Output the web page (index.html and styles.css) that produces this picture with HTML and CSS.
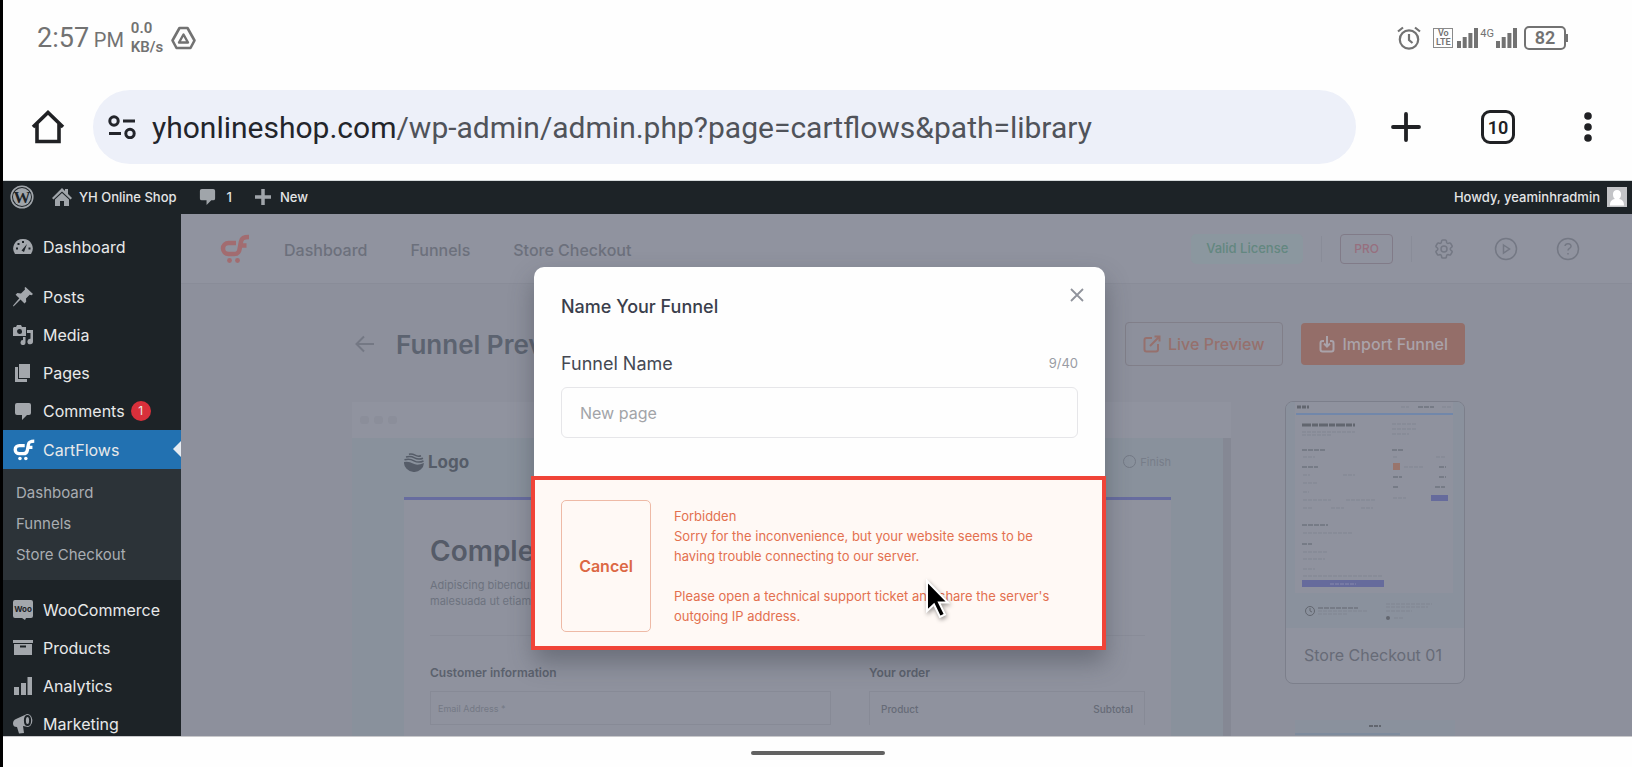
FILE: index.html
```html
<!DOCTYPE html>
<html lang="en">
<head>
    <meta charset="UTF-8">
    <meta name="viewport" content="width=device-width, initial-scale=1.0">
    <title>CartFlows - YH Online Shop</title>
    <link rel="stylesheet" href="styles.css">
</head>
<body>
    <svg class="defs" aria-hidden="true">
        <symbol id="cf-logo" viewBox="0 0 30 30">
            <path d="M16 9H8.500a5.500 5.500 0 0 0 0 11H14c3.500 0 5-1.500 5.500-4.500L21 7.500C21.700 4 23.500 3 29 3M20 11.500h6.500" fill="none" stroke="currentColor" stroke-width="4.500"/>
            <circle cx="9.500" cy="26.500" r="2.400" fill="currentColor"/>
            <circle cx="17.500" cy="26.500" r="2.400" fill="currentColor"/>
        </symbol>
        <symbol id="comment" viewBox="0 0 20 20">
            <path d="M4 2h12q2 0 2 2v8q0 2-2 2h-2l-5 5v-5H4q-2 0-2-2V4q0-2 2-2z" fill="currentColor"/>
        </symbol>
        <symbol id="signal" viewBox="0 0 21 20">
            <path d="M0 13h4v7H0zM5.700 9h4v11h-4zM11.400 5h4v15h-4zM17 0h4v20h-4z" fill="currentColor"/>
        </symbol>
    </svg>

    <div class="phone">
        <div class="status-bar">
            <span class="time">2:57 <small>PM</small></span>
            <span class="speed">0.0<br>KB/s</span>
            <svg class="drive" viewBox="0 0 25 24" width="25" height="24" fill="none" stroke="currentColor" stroke-linejoin="round">
                <path d="M8.500 2h8l7 12.500-4 7.500h-14l-4-7.500z" stroke-width="2.600"/>
                <path d="M12.500 8.500l4.500 8H8z" stroke-width="2.400"/>
            </svg>
            <div class="status-right">
                <svg class="alarm" viewBox="0 0 24 24" width="24" height="24" fill="none" stroke="currentColor" stroke-width="2.200">
                    <circle cx="12" cy="13.500" r="9.200"/><path d="M12 8v6l3.500 3M1 5.500l5-4M23 5.500l-5-4"/>
                </svg>
                <span class="volte">Vo<br>LTE</span>
                <svg width="21" height="20"><use href="#signal"/></svg>
                <span class="net">4G</span>
                <svg width="21" height="20"><use href="#signal"/></svg>
                <span class="battery">82</span>
            </div>
        </div>

        <div class="browser-bar">
            <button class="icon-btn" aria-label="Home">
                <svg viewBox="0 0 34 34" width="34" height="34" fill="none" stroke="currentColor" stroke-width="3.600"><path d="M2 17L17 2.500 32 17M6 14v17.500h22V14"/></svg>
            </button>
            <div class="omnibox">
                <svg viewBox="0 0 28 24" width="28" height="24" fill="none" stroke="currentColor" stroke-width="3"><circle cx="6" cy="6" r="4.200"/><path d="M15 6h12M1 18.500h12"/><circle cx="22" cy="18.500" r="4.200"/></svg>
                <span class="url">yhonlineshop.com<span>/wp-admin/admin.php?page=cartflows&amp;path=library</span></span>
            </div>
            <div class="browser-actions">
                <button class="icon-btn" aria-label="New tab">
                    <svg viewBox="0 0 30 30" width="30" height="30" fill="none" stroke="currentColor" stroke-width="3.800" stroke-linecap="round"><path d="M15 2v26M2 15h26"/></svg>
                </button>
                <button class="tabs">10</button>
                <button class="icon-btn menu" aria-label="Menu">
                    <svg viewBox="0 0 8 32" width="8" height="32" fill="currentColor"><circle cx="4" cy="5" r="3.800"/><circle cx="4" cy="16" r="3.800"/><circle cx="4" cy="27" r="3.800"/></svg>
                </button>
            </div>
        </div>

        <div class="admin-bar">
            <svg class="wp" viewBox="0 0 24 24" width="24" height="24"><circle cx="12" cy="12" r="10.800" fill="none" stroke="currentColor" stroke-width="1.600"/><circle cx="12" cy="12" r="9" fill="currentColor"/><text x="12" y="18" text-anchor="middle">W</text></svg>
            <a href="#" class="site"><svg viewBox="0 0 20 20" width="20" height="20" fill="currentColor"><path d="M10 1l3 3V2h3v5l4 4-1.500 1.500L10 4.500l-8.500 8L0 11z"/><path d="M10 6l7 6.500V19h-5v-5H8v5H3v-6.500z"/></svg>YH Online Shop</a>
            <a href="#" class="count"><svg width="19" height="19"><use href="#comment"/></svg>1</a>
            <a href="#" class="new"><svg viewBox="0 0 16 16" width="16" height="16" fill="none" stroke="currentColor" stroke-width="3.500"><path d="M8 0v16M0 8h16"/></svg>New</a>
            <a href="#" class="howdy">Howdy, yeaminhradmin
                <svg viewBox="0 0 20 20" width="20" height="20"><path fill="#c3c4c7" d="M0 0h20v20H0z"/><path fill="#fff" d="M10 3a4 4 0 0 1 4 4.500c0 2-.8 3.500-2 4.500 4 .8 5 3 5 6.500H3c0-3.500 1-5.700 5-6.500-1.200-1-2-2.500-2-4.500A4 4 0 0 1 10 3z"/></svg>
            </a>
        </div>

        <div class="wrap">
            <nav class="sidebar">
                <a href="#" class="first"><svg viewBox="0 0 20 20"><path d="M10 2a9.500 9.500 0 0 1 8 15H2a9.500 9.500 0 0 1 8-15z"/><path class="cut" d="M11 15l3-8-5.500 6.500zM9 4h2v2H9zM4.500 6h2v2h-2zM3 10.500h2v2H3zM15.500 10.500h2v2h-2z"/></svg>Dashboard</a>
                <a href="#"><svg viewBox="0 0 20 20"><path d="M12.500 0L20 7l-1.500 1.200-1.800-.4-3.700 3.700.2 3.300-1.700 1.700-4-4L1 19l-1 .5.300-1.200 6-7-3.700-3.500L4.300 6l3.700.4 4-3.900-.4-1.700z"/></svg>Posts</a>
                <a href="#"><svg viewBox="0 0 20 20"><path fill-rule="evenodd" d="M1 2h2l1-2h4l1 2h4v9H0V3zM6.500 4a2.500 2.500 0 1 0 .1 5A2.500 2.500 0 0 0 6.500 4z"/><path d="M14 5h6v11.500a2.800 2.800 0 1 1-2.500-2.800V8H14zM10 12h2.500v5.500a2.500 2.500 0 1 1-2.500-2.400z"/></svg>Media</a>
                <a href="#"><svg viewBox="0 0 20 20"><path d="M6 1h11v14H6z"/><path d="M2 4h3v12h9v3H2z"/></svg>Pages</a>
                <a href="#"><svg><use href="#comment"/></svg>Comments <span class="badge">1</span></a>
                <a href="#" class="current"><svg><use href="#cf-logo"/></svg>CartFlows</a>
                <div class="submenu">
                    <a href="#">Dashboard</a>
                    <a href="#">Funnels</a>
                    <a href="#">Store Checkout</a>
                </div>
                <a href="#"><svg viewBox="0 0 20 20"><path d="M2 0h16q2 0 2 2v14q0 2-2 2h-5l-1 2-3-2H2q-2 0-2-2V2q0-2 2-2z"/><text class="cut" x="10" y="12" text-anchor="middle">Woo</text></svg>WooCommerce</a>
                <a href="#"><svg viewBox="0 0 20 20"><path d="M0 2h20v3H0z"/><path fill-rule="evenodd" d="M1 6h18v11H1zM7 7.500v2h6v-2z"/></svg>Products</a>
                <a href="#"><svg viewBox="0 0 20 20"><path d="M1 11h5v8H1zM8 7h5v12H8zM14.500 1h4.500v18h-4.500z"/></svg>Analytics</a>
                <a href="#"><svg viewBox="0 0 20 20"><path d="M14 0q3 0 4.500 3t.5 6-4 4l-5-1 1 7-5 .5-2-6.500Q0 13 0 9.500T3 5z"/><ellipse class="ring" cx="14.500" cy="6.500" rx="2.600" ry="4.500"/></svg>Marketing</a>
            </nav>

            <main class="content">
                <header class="cf-header">
                    <svg class="cf-logo" width="30" height="30"><use href="#cf-logo"/></svg>
                    <nav class="cf-nav">
                        <a href="#">Dashboard</a>
                        <a href="#">Funnels</a>
                        <a href="#">Store Checkout</a>
                    </nav>
                    <div class="cf-status">
                        <span class="license">Valid License</span>
                        <i></i>
                        <span class="pro">PRO</span>
                        <i></i>
                    </div>
                    <div class="cf-icons">
                        <svg viewBox="0 0 24 24"><path d="M9.600 3.900c.1-.5.500-.9 1.100-.9h2.600c.6 0 1 .4 1.100.9l.2 1.300c.1.400.3.700.6.900l.7.300 1.400-.4c.5-.2 1.100 0 1.400.5l1.300 2.200c.3.500.2 1.100-.3 1.500l-1 .8c-.3.300-.5.600-.4 1 0 .4.100.7.400 1l1 .8c.5.400.6 1 .3 1.500l-1.300 2.200c-.3.500-.9.700-1.400.5l-1.300-.5-.9.300c-.2.200-.4.500-.5.900l-.2 1.300c-.1.500-.5.900-1.100.9h-2.600c-.6 0-1-.4-1.100-.9l-.2-1.300-.5-.9-.8-.3-1.300.5c-.5.200-1.100 0-1.400-.5l-1.300-2.200c-.3-.5-.2-1.100.3-1.500l1-.8c.5-.6.500-1.400 0-2l-1-.8c-.5-.4-.6-1-.3-1.500l1.300-2.200c.3-.5.900-.7 1.400-.5l1.300.4.800-.3.500-.9z"/><circle cx="12" cy="12" r="3"/></svg>
                        <svg viewBox="0 0 24 24"><circle cx="12" cy="12" r="10.500"/><path d="M9.500 8l6 4-6 4z"/></svg>
                        <svg viewBox="0 0 24 24"><circle cx="12" cy="12" r="10.500"/><path d="M9 9c.5-3.500 6.500-2.800 6 .5-.3 2-3 1.800-3 4M12 16v1.500"/></svg>
                    </div>
                </header>

                <div class="page">
                    <div class="page-head">
                        <svg viewBox="0 0 20 18" width="20" height="18" fill="none" stroke="currentColor" stroke-width="2"><path d="M19 9H2M9 1.500L1.500 9 9 16.500"/></svg>
                        <h1>Funnel Preview</h1>
                        <button class="btn btn-outline"><svg viewBox="0 0 18 18"><path d="M9 3H3.500Q1.500 3 1.500 5v9.500q0 2 2 2H13q2 0 2-2V9M7 11l9-9M11.500 1.500H16.500V6.500"/></svg>Live Preview</button>
                        <button class="btn btn-primary"><svg viewBox="0 0 18 18"><path d="M6 6H4.500q-2 0-2 2v6.500q0 2 2 2h9q2 0 2-2V8q0-2-2-2H12M9 1v10M6 8.500L9 11.500l3-3"/></svg>Import Funnel</button>
                    </div>

                    <div class="columns">
                        <section class="preview">
                            <div class="dots"><i></i><i></i><i></i></div>
                            <div class="site-preview">
                                <div class="site-head">
                                    <svg viewBox="0 0 20 20" width="20" height="20"><path d="M0 10q5-1 9 1.500t11-.5a10 9.500 0 0 1-20-1z" fill="currentColor"/><path d="M.5 7.800q5-1.500 9.500 1t9.500.2M2 5q4.500-1.500 8.500.8t8.500.4M5 2.200q3-.7 6 1t6 .5" fill="none" stroke="currentColor" stroke-width="1.500"/></svg>
                                    <b>Logo</b>
                                    <span class="finish"><i></i>Finish</span>
                                </div>
                                <div class="site-body">
                                    <h2>Complete your order</h2>
                                    <p>Adipiscing bibendum est ultricies integer<br>malesuada ut etiam pellentesque ornare</p>
                                    <div class="checkout">
                                        <div>
                                            <h3><label for="email">Customer information</label></h3>
                                            <input type="email" id="email" placeholder="Email Address *">
                                        </div>
                                        <div>
                                            <h3>Your order</h3>
                                            <table>
                                                <tr><th>Product</th><th>Subtotal</th></tr>
                                            </table>
                                        </div>
                                    </div>
                                </div>
                            </div>
                        </section>

                        <aside>
                            <a href="#" class="card">
                                <svg viewBox="0 0 178 226">
                                    <path fill="#8a919d" d="M0 0h178v226H0z"/>
                                    <path fill="#8f929e" d="M9 0h158v191H9z"/>
                                    <path stroke="#7187aa" stroke-width="2" d="M10 12h157"/>
                                    <g fill="none" stroke="#62666f" stroke-width="3">
                                        <path d="M11 5h12" stroke-dasharray="4 1"/><path d="M16 23h53" stroke-dasharray="9 1 6 1"/>
                                    </g>
                                    <g fill="none" stroke="#767b86" stroke-width="2">
                                        <path d="M16 48h24M16 65h16M16 123h26M16 142h10M106 48h12M107 75h9M107 85h6M149 85h10M153 65h7M153 75h7M132 5h16M32 206h40" stroke-dasharray="5 1"/>
                                    </g>
                                    <g fill="none" stroke="#808591" stroke-width="1">
                                        <path d="M16 30h53M16 33h29M17 55h12M17 73h7M57 73h12M17 81h14M17 90h6M17 98h28M60 98h30M17 106h9M45 106h13M75 106h12M17 131h50M17 150h25M17 157h22M17 167h12M17 174h80M106 22h24M106 27h24M106 32h17M107 55h5M150 55h10M118 65h20M107 96h13M115 5h8M156 5h10M32 209h49M32 212h30M100 202h46M100 205h42M100 209h26M108 216h10" stroke-dasharray="4 1"/>
                                    </g>
                                    <path fill="#99756c" d="M107 61h7v7h-7z"/>
                                    <path fill="#666b9c" d="M145 93h17v6h-17zM16 178h82v7H16z"/>
                                    <path stroke="#878aad" stroke-width="1" stroke-dasharray="4 1" d="M44 182h26"/>
                                    <circle cx="24" cy="209" r="4.500" fill="none" stroke="#62666f"/><path d="M24 206v3l2 1" fill="none" stroke="#62666f"/>
                                    <circle cx="102" cy="216" r="2" fill="#62666f"/>
                                </svg>
                                <span>Store Checkout 01</span>
                            </a>
                            <div class="next-card">
                                <svg viewBox="0 0 160 60"><path fill="#8a919d" d="M0 0h160v60H0z"/><path stroke="#62666f" stroke-width="2" stroke-dasharray="4 1" d="M74 6h12"/><path stroke="#73859c" d="M0 14h105"/></svg>
                            </div>
                        </aside>
                    </div>
                </div>
            </main>

            <div class="overlay">
                <div class="modal" role="dialog" aria-labelledby="modal-title">
                    <div class="modal-body">
                        <button class="close" aria-label="Close"><svg viewBox="0 0 14 14" width="14" height="14" fill="none" stroke="currentColor" stroke-width="1.800"><path d="M1 1l12 12M13 1L1 13"/></svg></button>
                        <h2 id="modal-title">Name Your Funnel</h2>
                        <div class="field-head">
                            <label for="funnel-name">Funnel Name</label>
                            <span>9/40</span>
                        </div>
                        <input type="text" id="funnel-name" placeholder="New page">
                    </div>
                    <div class="modal-footer">
                        <button class="cancel">Cancel</button>
                        <p>Forbidden<br>Sorry for the inconvenience, but your website seems to be having trouble connecting to our server.<br><br>Please open a technical support ticket and share the server's outgoing IP address.</p>
                        <svg class="cursor" viewBox="0 0 30 42" width="30" height="42"><path d="M4 3v30l7-6.500L17 39l5-2.500-6-12h9z" fill="#000" stroke="#fff" stroke-width="2"/></svg>
                    </div>
                </div>
            </div>
        </div>

        <div class="gesture-bar"><span></span></div>
    </div>
</body>
</html>
```
FILE: styles.css
```css
* {
    box-sizing: border-box;
}
body {
    margin: 0;
    font-family: Inter, "Liberation Sans", sans-serif;
    background: #fefefe;
}
a {
    color: inherit;
    text-decoration: none;
}
button {
    font-family: inherit;
    padding: 0;
    border: none;
    background: none;
    cursor: pointer;
}
h1, h2, h3, p {
    margin: 0;
}
svg {
    flex: none;
}
.defs {
    position: absolute;
    width: 0;
    height: 0;
}
.phone {
    height: 100vh;
    display: flex;
    flex-direction: column;
    border-left: 3px solid #000;
    overflow: hidden;
}

/* Status bar */
.status-bar {
    display: flex;
    align-items: center;
    height: 76px;
    padding: 0 66px 0 34px;
    font-family: Roboto, sans-serif;
    color: #727272;
}
.time {
    font-size: 27px;
}
.time small {
    font-size: 20px;
    margin-left: -2px;
}
.speed {
    margin-left: 7px;
    font-size: 15px;
    font-weight: 600;
    line-height: 19px;
}
.drive {
    margin-left: 8px;
}
.status-right {
    margin-left: auto;
    display: flex;
    align-items: center;
    gap: 2px;
}
.alarm {
    margin-right: 10px;
}
.volte {
    width: 20px;
    height: 20px;
    margin-right: 2px;
    border: 1px solid #8a8a8a;
    font-size: 9px;
    font-weight: 600;
    line-height: 9px;
    text-align: center;
}
.net {
    height: 20px;
    font-size: 11px;
    line-height: 11px;
}
.battery {
    position: relative;
    width: 42px;
    height: 24px;
    margin-left: 5px;
    border: 2px solid #727272;
    border-radius: 5px;
    font-size: 18px;
    font-weight: 600;
    line-height: 20px;
    text-align: center;
}
.battery::after {
    content: "";
    position: absolute;
    right: -4px;
    top: 6px;
    width: 2px;
    height: 8px;
    background: #727272;
}

/* Browser bar */
.browser-bar {
    display: flex;
    align-items: center;
    height: 105px;
    padding: 0 40px 2px 28px;
    border-bottom: 1px solid #d5dadb;
    color: #202124;
}
.icon-btn {
    color: inherit;
    display: flex;
}
.omnibox {
    flex: 1;
    display: flex;
    align-items: center;
    gap: 16px;
    height: 74px;
    margin: 0 35px 0 28px;
    padding-left: 15px;
    border-radius: 37px;
    background: #edf0f9;
    color: #23252b;
}
.url {
    font-family: Roboto, sans-serif;
    font-size: 30px;
    white-space: nowrap;
}
.url span {
    color: #50535a;
}
.browser-actions {
    display: flex;
    align-items: center;
    gap: 60px;
}
.menu {
    padding: 0 0 0 9px;
}
.tabs {
    width: 34px;
    height: 34px;
    border: 3px solid #202124;
    border-radius: 9px;
    font-family: Roboto, sans-serif;
    font-size: 18px;
    font-weight: 600;
    color: #202124;
}

/* WordPress admin bar */
.admin-bar {
    display: flex;
    align-items: center;
    height: 33px;
    padding: 0 5px 2px 7px;
    background: #1d2327;
    color: #e4e5e6;
    font-size: 13px;
    font-weight: 500;
}
.admin-bar a {
    display: flex;
    align-items: center;
}
.admin-bar svg {
    color: #a0a5aa;
}
.wp text {
    font: bold 17px "Liberation Serif", serif;
    fill: #1d2327;
}
.site {
    margin-left: 18px;
    gap: 7px;
}
.count {
    margin-left: 21px;
    gap: 10px;
}
.new {
    margin-left: 23px;
    gap: 9px;
}
.admin-bar .howdy {
    margin-left: auto;
    gap: 7px;
}

/* Sidebar */
.wrap {
    position: relative;
    flex: 1;
    min-height: 0;
    display: flex;
    overflow: hidden;
}
.sidebar {
    width: 178px;
    flex: none;
    padding-top: 14px;
    background: #1d2327;
    color: #e8e9ea;
    font-size: 16px;
}
.sidebar > a {
    position: relative;
    display: flex;
    align-items: center;
    gap: 10px;
    height: 38px;
    padding-left: 10px;
}
.sidebar > .first {
    margin-bottom: 12px;
}
.sidebar svg {
    width: 20px;
    height: 20px;
    color: #a3a7ac;
    fill: currentColor;
}
.sidebar svg .cut {
    fill: #1d2327;
}
.sidebar svg .ring {
    fill: none;
    stroke: #1d2327;
    stroke-width: 2;
}
.sidebar text {
    font-size: 8px;
    font-weight: 700;
}
.badge {
    width: 20px;
    height: 20px;
    margin-left: -4px;
    border-radius: 50%;
    background: #d9303b;
    font-size: 12px;
    line-height: 20px;
    text-align: center;
}
.sidebar > .current {
    height: 39px;
    background: #2271b1;
}
.current svg {
    width: 22px;
    height: 22px;
    margin-right: -2px;
    color: #fff;
}
.current::after {
    content: "";
    position: absolute;
    right: 0;
    top: 11px;
    border: 8px solid transparent;
    border-left: none;
    border-right-color: #e6ebf1;
}
.submenu {
    padding: 8px 13px 10px;
    margin-bottom: 11px;
    background: #2c3338;
    color: #a9adb2;
    font-size: 15px;
}
.submenu a {
    display: block;
    line-height: 31px;
}

/* CartFlows page, dimmed behind the modal */
.content {
    flex: 1;
    min-width: 0;
    background: #8d909c;
    color: #6c707c;
}
.cf-header {
    display: flex;
    align-items: center;
    height: 70px;
    padding: 0 52px 0 39px;
    border-bottom: 1px solid #898c98;
    background: #90939f;
}
.cf-logo {
    color: #a26c70;
}
.cf-nav {
    display: flex;
    gap: 43px;
    margin: 3px auto 0 34px;
    font-size: 16px;
    font-weight: 500;
}
.cf-status {
    display: flex;
    align-items: center;
    gap: 18px;
    margin-right: 20px;
}
.cf-status i {
    width: 1px;
    height: 26px;
    background: #898c98;
}
.license {
    height: 30px;
    padding: 0 15px;
    border-radius: 5px;
    background: #8b979f;
    color: #638780;
    font-size: 13px;
    font-weight: 500;
    line-height: 28px;
}
.pro {
    height: 30px;
    padding: 0 13px;
    border: 1px solid #817b88;
    border-radius: 4px;
    color: #976f7e;
    font-size: 12px;
    font-weight: 500;
    line-height: 27px;
}
.cf-icons {
    display: flex;
    gap: 38px;
}
.cf-icons svg {
    width: 24px;
    height: 24px;
    fill: none;
    stroke: #747884;
    stroke-width: 1.5;
}
.page {
    padding: 38px 167px 0 171px;
}
.page-head {
    display: flex;
    align-items: center;
    height: 44px;
    padding-left: 3px;
}
.page-head > svg {
    color: #747884;
}
.page-head h1 {
    margin: 0 auto 0 21px;
    color: #5c6370;
    font-size: 26px;
    font-weight: 600;
}
.btn {
    display: flex;
    align-items: center;
    gap: 7px;
    height: 42px;
    padding: 0 17px;
    border-radius: 4px;
    font-size: 16px;
    font-weight: 500;
}
.btn svg {
    width: 18px;
    height: 18px;
    fill: none;
    stroke: currentColor;
    stroke-width: 2;
}
.btn-outline {
    height: 44px;
    margin-right: 18px;
    border: 1px solid #817f89;
    color: #96706d;
}
.btn-primary {
    background: #946e69;
    color: #aaa3aa;
}
.columns {
    display: grid;
    grid-template-columns: 1fr 180px;
    gap: 54px;
    margin-top: 36px;
}
.preview {
    height: 400px;
    background: #90939f;
}
.dots {
    display: flex;
    align-items: center;
    gap: 5px;
    height: 36px;
    padding-left: 8px;
}
.dots i {
    width: 9px;
    height: 8px;
    border-radius: 3px;
    background: #8b8e9a;
}
.site-preview {
    height: 400px;
    padding: 0 52px;
    border-right: 8px solid #858894;
    background: #89919c;
}
.site-head {
    display: flex;
    align-items: center;
    gap: 4px;
    height: 62px;
    padding-bottom: 12px;
    border-bottom: 3px solid #676c9f;
    color: #555c68;
    font-size: 17px;
}
.finish {
    display: flex;
    align-items: center;
    gap: 4px;
    margin-left: auto;
    color: #777d89;
    font-size: 11px;
}
.finish i {
    width: 13px;
    height: 13px;
    border: 1px solid #737985;
    border-radius: 50%;
}
.site-body {
    height: 300px;
    padding: 33px 26px 0;
    background: #8f929e;
}
.site-body h2 {
    color: #555b68;
    font-size: 28px;
    font-weight: 600;
    line-height: 36px;
}
.site-body p {
    padding: 8px 0 26px;
    border-bottom: 1px solid #898c98;
    color: #6d727e;
    font-size: 11px;
    line-height: 16px;
}
.checkout {
    display: grid;
    grid-template-columns: 401px 1fr;
    gap: 38px;
    padding-top: 29px;
}
.checkout h3 {
    margin-bottom: 10px;
    color: #5b616d;
    font-size: 12px;
    font-weight: 600;
    line-height: 16px;
}
.checkout input {
    display: block;
    width: 100%;
    height: 34px;
    padding: 0 7px;
    border: 1px solid #878a96;
    background: none;
    font: 9px Inter, sans-serif;
}
.checkout input::placeholder {
    color: #747985;
}
.checkout table {
    width: 100%;
    height: 34px;
    border: 1px solid #878a96;
    border-bottom: none;
    border-spacing: 0;
    font-size: 10px;
}
.checkout th {
    padding: 0 11px;
    color: #666b77;
    font-weight: 500;
    text-align: left;
}
.checkout th:last-child {
    text-align: right;
}
.card {
    display: block;
    height: 283px;
    margin-top: -1px;
    border: 1px solid #7c7f8b;
    border-radius: 8px;
    overflow: hidden;
    background: #90939f;
}
.card svg {
    display: block;
    width: 100%;
}
.card span {
    display: block;
    color: #676b77;
    font-size: 16px;
    line-height: 54px;
    padding-left: 18px;
}
.next-card {
    margin: 36px 10px 0;
}

/* Modal */
.overlay {
    position: absolute;
    inset: 0;
    display: flex;
    justify-content: center;
    align-items: flex-start;
    padding: 53px 0 0 4px;
}
.modal {
    width: 571px;
    border-radius: 10px 10px 0 0;
    background: #fefefe;
    box-shadow: 0 12px 24px rgba(50, 54, 66, 0.4);
}
.modal-body {
    position: relative;
    height: 209px;
    padding: 27px 27px 0;
}
.close {
    position: absolute;
    top: 21px;
    right: 21px;
    display: flex;
    color: #90939c;
}
.modal h2 {
    color: #3a3e4c;
    font-size: 18px;
    font-weight: 500;
    line-height: 26px;
}
.field-head {
    display: flex;
    justify-content: space-between;
    margin: 31px 0 10px;
    color: #444852;
    font-size: 18px;
    line-height: 26px;
}
.field-head span {
    color: #999ca4;
    font-size: 13px;
    line-height: 24px;
}
.modal input {
    display: block;
    width: 100%;
    height: 51px;
    padding: 0 18px;
    border: 1px solid #e6e6e9;
    border-radius: 6px;
    background: #fefefe;
    font: 16px Inter, sans-serif;
}
.modal input::placeholder {
    color: #a2a4a8;
}
.modal-footer {
    position: relative;
    display: flex;
    gap: 23px;
    margin: 0 -1px 0 -3px;
    padding: 20px 38px 14px 26px;
    border: 4px solid #f04438;
    background: #fff9f5;
}
.cancel {
    flex: none;
    width: 90px;
    height: 132px;
    border: 1px solid #eebaa6;
    border-radius: 5px;
    color: #dc6844;
    font-size: 16px;
    font-weight: 600;
}
.modal-footer p {
    padding-top: 6px;
    color: #e3704f;
    font-size: 13px;
    line-height: 20px;
}
.cursor {
    position: absolute;
    top: 98px;
    left: 388px;
    filter: drop-shadow(1px 2px 2px rgba(0, 0, 0, 0.4));
}

/* Android gesture bar */
.gesture-bar {
    display: flex;
    justify-content: center;
    height: 31px;
    padding-top: 14px;
    border-top: 1px solid #c9c9cc;
}
.gesture-bar span {
    width: 134px;
    height: 4px;
    border-radius: 2px;
    background: #626262;
}
```
